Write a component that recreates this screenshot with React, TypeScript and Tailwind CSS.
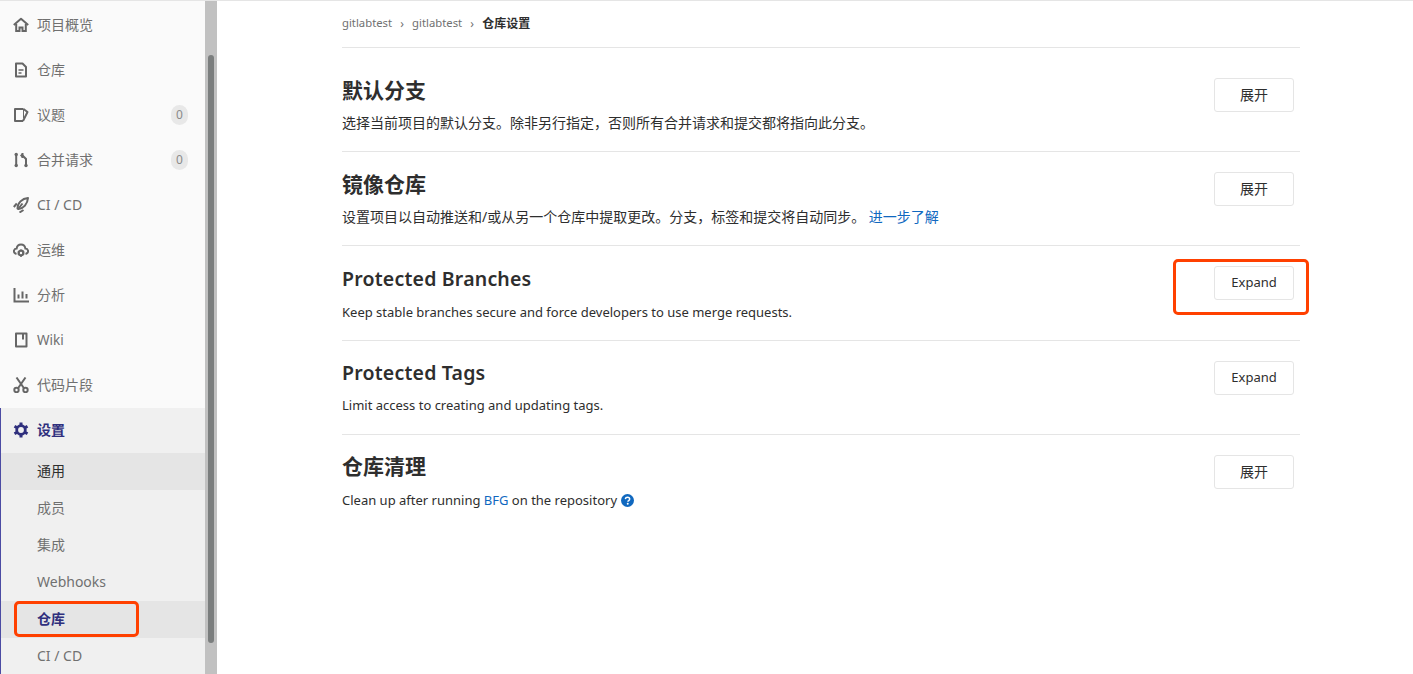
import React from 'react';

const FONT = "font-['Noto_Sans','Noto_Sans_CJK_SC',sans-serif]";

const Icon: React.FC<{ children: React.ReactNode }> = ({ children }) => (
  <svg width="16" height="16" viewBox="0 0 16 16" fill="none" stroke="currentColor" strokeWidth="2" className="shrink-0">
    {children}
  </svg>
);

const icons: Record<string, React.ReactNode> = {
  home: (
    <Icon>
      <path d="M.8 8 8 1.800 15.200 8" strokeWidth="2" strokeLinejoin="round" />
      <path d="M3.200 7v7h3.300v-3.500h3V14h3.300V7" strokeWidth="2" />
    </Icon>
  ),
  doc: (
    <Icon>
      <path d="M3 1.500h6.500L13 5v9.500H3z" strokeLinejoin="round" />
      <path d="M5.500 8h5M5.500 11h3" strokeWidth="1.600" />
    </Icon>
  ),
  issue: (
    <Icon>
      <path d="M10.500 2H2v12h8" strokeLinejoin="round" />
      <path d="M10.500 2l4 3-4.500 9" strokeWidth="2" strokeLinejoin="round" />
      <path d="M10.500 2v9" strokeWidth="1" />
    </Icon>
  ),
  merge: (
    <Icon>
      <path d="M3.200 3v10M13 13V7L9.500 3.500" strokeWidth="2" />
      <path d="M9.500 1v5l-2.500-2.500z" fill="currentColor" stroke="none" />
      <path d="M9.500 1v5" strokeWidth="2" />
      <circle cx="3.200" cy="2.500" r="1.700" fill="currentColor" stroke="none" />
      <circle cx="3.200" cy="13.500" r="1.700" fill="currentColor" stroke="none" />
      <circle cx="13" cy="13.500" r="1.700" fill="currentColor" stroke="none" />
    </Icon>
  ),
  rocket: (
    <Icon>
      <path d="M4.500 11.500C4.500 6 9 1.500 15 1c-.5 6-4.500 10.500-9.500 11z" strokeWidth="2" strokeLinejoin="round" />
      <path d="M.8 10 3.800 6.500M6.500 15.500l4-2.500M5.500 11.500 9.500 6.500" strokeWidth="2" />
    </Icon>
  ),
  cloud: (
    <Icon>
      <path d="M3.500 12C1.500 11.500.6 10 1 8.500c.4-1.300 1.500-1.900 2.600-1.900C4 4 6 2.500 8 2.500s4 1.500 4.400 4.100c1.100 0 2.200.6 2.600 1.900.4 1.500-.5 3-2.500 3.500" strokeWidth="2" />
      <circle cx="8" cy="11" r="2.300" strokeWidth="2.200" />
      <path d="M8 7.500v1M8 13.500v1.500M4.800 9.500l1 .5M10.200 12l1 .5M4.800 12.500l1-.5M10.200 10l1-.5" strokeWidth="1.500" />
    </Icon>
  ),
  chart: (
    <Icon>
      <path d="M1.500 1v13.500H16" strokeWidth="2" />
      <path d="M5.500 7.500v4M9.500 4.500v7M13.500 7v4.500" strokeWidth="2" />
    </Icon>
  ),
  book: (
    <Icon>
      <path d="M3 1.500h10.500v13H3z" strokeLinejoin="round" />
      <path d="M10 1.500v6" strokeWidth="2" />
    </Icon>
  ),
  scissors: (
    <Icon>
      <path d="M3.500 .5 11 11.200M12.500 .5 5 11.200" strokeWidth="2" />
      <circle cx="3.500" cy="13" r="2.200" strokeWidth="2" />
      <circle cx="12.500" cy="13" r="2.200" strokeWidth="2" />
    </Icon>
  ),
  gear: (
    <Icon>
      <path d="M8 .5v3M8 12.500v3M1.500 4.200l2.600 1.500M11.900 10.300l2.600 1.500M1.500 11.800l2.600-1.500M11.900 5.700l2.600-1.500" strokeWidth="3" />
      <circle cx="8" cy="8" r="4.300" strokeWidth="2.800" />
    </Icon>
  ),
};

const navItems = [
  { icon: 'home', label: '项目概览' },
  { icon: 'doc', label: '仓库' },
  { icon: 'issue', label: '议题', count: 0 },
  { icon: 'merge', label: '合并请求', count: 0 },
  { icon: 'rocket', label: 'CI / CD' },
  { icon: 'cloud', label: '运维' },
  { icon: 'chart', label: '分析' },
  { icon: 'book', label: 'Wiki' },
  { icon: 'scissors', label: '代码片段' },
];

const subItems = [
  { label: '通用', cls: 'bg-[#e5e5e5] text-[#2e2e2e]' },
  { label: '成员', cls: 'text-[#707070]' },
  { label: '集成', cls: 'text-[#707070]' },
  { label: 'Webhooks', cls: 'text-[#707070] text-[13.4px]' },
  { label: '仓库', cls: 'bg-[#e5e5e5] text-[#2f2f7d] font-bold' },
  { label: 'CI / CD', cls: 'text-[#707070]' },
];

const Sidebar: React.FC = () => (
  <aside className="relative w-[205px] h-full shrink-0 bg-[#fafafa] overflow-hidden">
    <ul className="pt-[1px]">
      {navItems.map((item) => (
        <li key={item.label} className="flex items-center h-[45px] pl-[13px] pr-[17px] text-[#707070] text-[14px]">
          <span className="flex text-[#666666]">{icons[item.icon]}</span>
          <span className={`ml-2 flex-1 ${item.label === 'Wiki' ? 'text-[13.5px] pt-[1px]' : ''}`}>{item.label}</span>
          {item.count !== undefined && (
            <span className="w-[17px] h-5 rounded-full bg-[#e8e8e8] text-[12px] text-[#8a8a8a] flex items-center justify-center">
              {item.count}
            </span>
          )}
        </li>
      ))}
    </ul>
    <div className="bg-[#f0f0f0] border-l-[1px] border-[#4b4ba3] h-[270px] mt-[1px]">
      <div className="flex items-center h-[45px] pb-[2px] pl-3 text-[#2f2f7d] font-bold text-[14px]">
        {icons.gear}
        <span className="ml-2">设置</span>
      </div>
      <ul>
        {subItems.map((item) => (
          <li key={item.label} className={`flex items-center h-[37px] pl-9 pb-[3px] text-[14px] ${item.cls}`}>
            {item.label}
          </li>
        ))}
      </ul>
    </div>
    <div className="absolute left-[14px] top-[600px] w-[125px] h-[36px] border-[3px] border-[#ff4000] rounded-[5px]" />
  </aside>
);

const Scrollbar: React.FC = () => (
  <div className="w-3 h-full shrink-0 bg-[#c1c1c1] pl-[3px] pt-[54px]">
    <div className="w-1.5 h-[588px] rounded-full bg-[#7b7e7e]" />
  </div>
);

type SectionProps = {
  title: string;
  action: string;
  latin?: boolean;
  height: string;
  top: string;
  headClass?: string;
  last?: boolean;
  children: React.ReactNode;
};

const Section: React.FC<SectionProps> = ({ title, action, latin, height, top, headClass, last, children }) => (
  <section className={`relative ${height} ${top} ${last ? '' : 'border-b border-[#e5e5e5]'}`}>
    <div className="flex justify-between pr-1.5">
      <div>
        <h4 className={`text-[#2e2e2e] h-[26px] leading-[26px] ${latin ? 'text-[19.500px] font-semibold tracking-[0.2px]' : 'text-[21px] font-bold -mt-[1px] mb-[1px]'} ${headClass ?? ''}`}>{title}</h4>
        {children}
      </div>
      <button className={`w-20 h-[34px] rounded-[3px] border border-[#e5e5e5] bg-white text-[#2e2e2e] ${latin ? 'text-[13px]' : 'text-[14px] pb-[1px]'}`}>{action}</button>
    </div>
  </section>
);

export default function App() {
  return (
    <div className={`flex w-[1413px] h-[674px] overflow-hidden bg-white border-t border-[#e5e5e5] ${FONT}`}>
      <Sidebar />
      <Scrollbar />
      <main className="relative flex-1 pl-[125px] pr-[113px]">
        <nav className="h-[47px] border-b border-[#e5e5e5] flex items-center text-[11.300px] text-[#707070] pb-[1px]">
          <span>gitlabtest</span>
          <span className="w-5 text-center text-[12px]">›</span>
          <span>gitlabtest</span>
          <span className="w-5 text-center text-[12px]">›</span>
          <span className="font-bold text-[#2e2e2e] text-[12px]">仓库设置</span>
        </nav>
        <Section title="默认分支" action="展开" height="h-[104px]" top="pt-[30px]">
          <p className="text-[14px] text-[#2e2e2e] mt-[9px]">选择当前项目的默认分支。除非另行指定，否则所有合并请求和提交都将指向此分支。</p>
        </Section>
        <Section title="镜像仓库" action="展开" height="h-[94px]" top="pt-5">
          <p className="text-[14px] text-[#2e2e2e] mt-[9px]">
            设置项目以自动推送和/或从另一个仓库中提取更改。分支，标签和提交将自动同步。 <span className="text-[#1068bf]">进一步了解</span>
          </p>
        </Section>
        <Section title="Protected Branches" action="Expand" latin height="h-[95px]" top="pt-5">
          <p className="text-[13px] text-[#2e2e2e] mt-[11px]">Keep stable branches secure and force developers to use merge requests.</p>
        </Section>
        <Section title="Protected Tags" action="Expand" latin height="h-[94px]" top="pt-5" headClass="-mt-[1px] mb-[1px]">
          <p className="text-[13px] text-[#2e2e2e] mt-[10px]">Limit access to creating and updating tags.</p>
        </Section>
        <Section title="仓库清理" action="展开" height="h-[94px]" top="pt-5" headClass="-mt-[2px] mb-[2px]" last>
          <p className="text-[13px] text-[#2e2e2e] mt-[12px] flex items-center">
            Clean up after running&nbsp;<span className="text-[#1068bf]">BFG</span>&nbsp;on the repository
            <svg width="13" height="13" viewBox="0 0 16 16" className="ml-1">
              <circle cx="8" cy="8" r="8" fill="#1068bf" />
              <path d="M5.300 6.200C5.500 4.800 6.600 4 8 4c1.600 0 2.700.9 2.700 2.200 0 1-.6 1.500-1.300 2-.6.4-.9.7-.9 1.300" fill="none" stroke="#fff" strokeWidth="1.800" />
              <circle cx="8.300" cy="12" r="1.200" fill="#fff" />
            </svg>
          </p>
        </Section>
        <div className="absolute left-[956px] top-[258px] w-[136px] h-[56px] border-[3px] border-[#ff4000] rounded-[5px]" />
      </main>
    </div>
  );
}
